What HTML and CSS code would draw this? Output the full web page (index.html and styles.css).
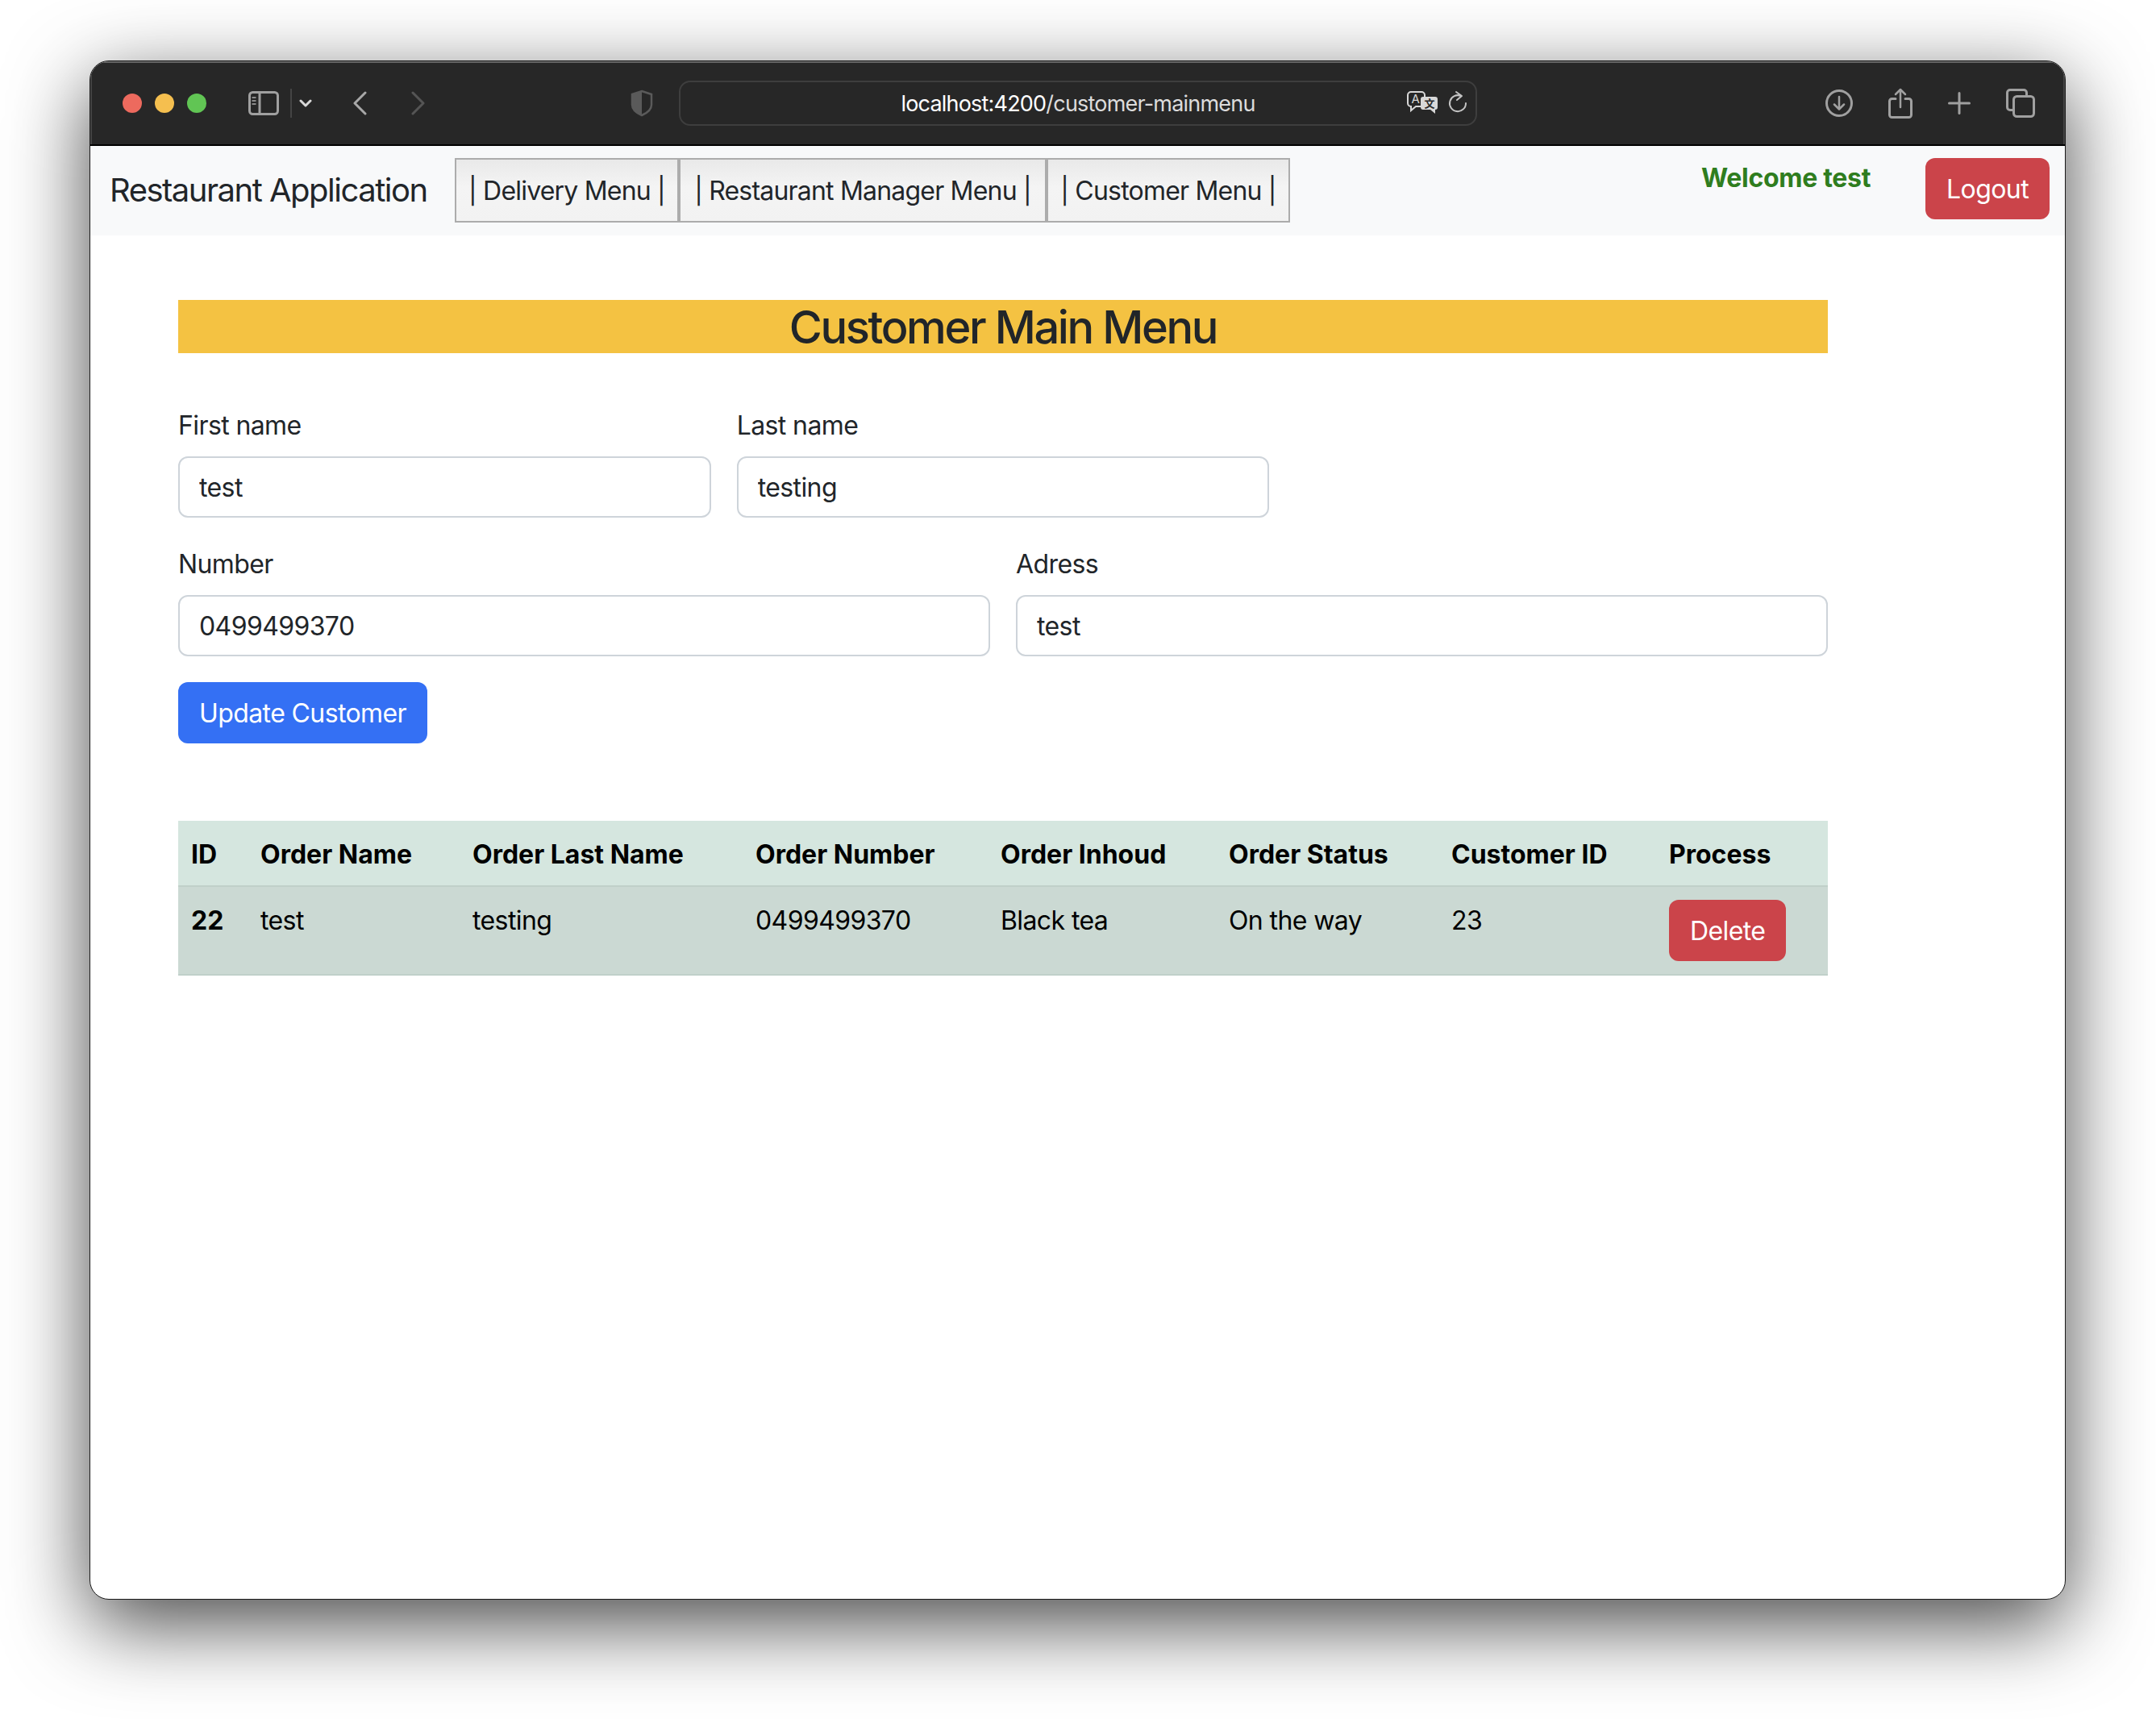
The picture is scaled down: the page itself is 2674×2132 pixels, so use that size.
FILE: index.html
```html
<!DOCTYPE html>
<html>
<head>
    <meta charset="utf-8">
    <title>Restaurant Application</title>
    <link rel="stylesheet" href="styles.css">
</head>
<body>
    <div class="window">
        <div class="titlebar">
            <div class="dots">
                <span class="dot dot-red"></span>
                <span class="dot dot-yellow"></span>
                <span class="dot dot-green"></span>
            </div>
            <svg class="ico ico-sidebar" width="40" height="32" viewBox="0 0 40 32" fill="none" stroke="#a0a0a0" stroke-width="3">
                <rect x="2.500" y="2.500" width="35" height="27" rx="4"/>
                <path d="M15 2v28"/>
                <path d="M5.500 9h5M5.500 13h5M5.500 17h5" stroke-width="2" stroke="#8c8c8c"/>
            </svg>
            <span class="sep"></span>
            <svg class="ico ico-chevron" width="16" height="10" viewBox="0 0 16 10" fill="none" stroke="#d8d8d8" stroke-width="3" stroke-linecap="round" stroke-linejoin="round">
                <path d="M2 2l6 6 6-6"/>
            </svg>
            <svg class="ico ico-back" width="18" height="30" viewBox="0 0 18 30" fill="none" stroke="#a8a8a8" stroke-width="3" stroke-linecap="round" stroke-linejoin="round">
                <path d="M16 2L3 15l13 13"/>
            </svg>
            <svg class="ico ico-forward" width="18" height="30" viewBox="0 0 18 30" fill="none" stroke="#555" stroke-width="3" stroke-linecap="round" stroke-linejoin="round">
                <path d="M2 2l13 13L2 28"/>
            </svg>
            <svg class="ico ico-shield" width="28" height="34" viewBox="0 0 28 34" fill="none">
                <path d="M14 2L26 6v13c0 6-5 10-12 13C7 29 2 25 2 19V6z" stroke="#5a5a5a" stroke-width="2.500"/>
                <path d="M14 2L2 6v13c0 6 5 10 12 13z" fill="#5a5a5a"/>
            </svg>
            <div class="addressbar">
                <span class="url">localhost:4200<span class="url-path">/customer-mainmenu</span></span>
                <div class="address-icons">
                    <svg width="40" height="30" viewBox="0 0 40 30">
                        <path d="M5 2h13a4 4 0 0 1 4 4v10a4 4 0 0 1-4 4H11l-6 5v-5a4 4 0 0 1-4-4V6a4 4 0 0 1 4-4z" fill="#272727" stroke="#d8d8d8" stroke-width="2"/>
                        <text class="glyph-a" x="5.500" y="16">A</text>
                        <path d="M20 8h15a3 3 0 0 1 3 3v10a3 3 0 0 1-3 3v5l-6-5h-9a3 3 0 0 1-3-3V11a3 3 0 0 1 3-3z" fill="#d8d8d8"/>
                        <text class="glyph-wen" x="21.500" y="21">文</text>
                    </svg>
                    <svg width="24" height="30" viewBox="0 0 24 30" fill="none" stroke="#c4c4c4" stroke-width="2" stroke-linecap="round" stroke-linejoin="round">
                        <path d="M16 7A10 10 0 1 0 22 16"/>
                        <path d="M10 2l7 5-6 5"/>
                    </svg>
                </div>
            </div>
            <div class="toolbar-right">
                <svg width="34" height="36" viewBox="0 0 34 36" fill="none" stroke="#a0a0a0" stroke-width="3" stroke-linecap="round" stroke-linejoin="round">
                    <circle cx="17" cy="18" r="15.500"/>
                    <path d="M17 10v15M11 19.500L17 25.500l6-6" stroke-width="2.500"/>
                </svg>
                <svg width="30" height="38" viewBox="0 0 30 38" fill="none" stroke="#a0a0a0" stroke-width="3" stroke-linecap="round" stroke-linejoin="round">
                    <path d="M9 13.500H4.500a3 3 0 0 0-3 3V33.500a3 3 0 0 0 3 3h21a3 3 0 0 0 3-3V16.500a3 3 0 0 0-3-3H21"/>
                    <path d="M15 24V2M9 8l6-6 6 6" stroke-width="2.500"/>
                </svg>
                <svg width="28" height="28" viewBox="0 0 28 28" fill="none" stroke="#a0a0a0" stroke-width="3" stroke-linecap="round">
                    <path d="M14 1.500v25M1.500 14h25"/>
                </svg>
                <svg width="36" height="36" viewBox="0 0 36 36" fill="none" stroke="#a0a0a0" stroke-width="3">
                    <path d="M8 26.500H5A3.500 3.500 0 0 1 1.500 23V5A3.500 3.500 0 0 1 5 1.500h17A3.500 3.500 0 0 1 25.500 5v3.500"/>
                    <rect x="9.500" y="9.500" width="25" height="25" rx="4"/>
                </svg>
            </div>
        </div>

        <nav class="navbar">
            <span class="brand">Restaurant Application</span>
            <div class="navbtns">
                <button class="navbtn navbtn-delivery">| Delivery Menu |</button>
                <button class="navbtn navbtn-manager">| Restaurant Manager Menu |</button>
                <button class="navbtn navbtn-customer">| Customer Menu |</button>
            </div>
            <span class="welcome">Welcome test</span>
            <button class="btn btn-danger">Logout</button>
        </nav>

        <div class="content">
            <h3 class="page-title">Customer Main Menu</h3>

            <form class="customer-form" onsubmit="event.preventDefault();">
                <div class="form-row form-row-3">
                    <div>
                        <label class="form-label">First name</label>
                        <input class="form-control" type="text" value="test">
                    </div>
                    <div>
                        <label class="form-label">Last name</label>
                        <input class="form-control" type="text" value="testing">
                    </div>
                </div>
                <div class="form-row form-row-2">
                    <div>
                        <label class="form-label">Number</label>
                        <input class="form-control" type="text" value="0499499370">
                    </div>
                    <div>
                        <label class="form-label">Adress</label>
                        <input class="form-control" type="text" value="test">
                    </div>
                </div>
                <button class="btn btn-primary">Update Customer</button>
            </form>

            <table class="orders">
                <colgroup>
                    <col class="col-id">
                    <col class="col-name">
                    <col class="col-last">
                    <col class="col-number">
                    <col class="col-inhoud">
                    <col class="col-status">
                    <col class="col-customer">
                    <col class="col-process">
                </colgroup>
                <thead>
                    <tr>
                        <th>ID</th>
                        <th>Order Name</th>
                        <th>Order Last Name</th>
                        <th>Order Number</th>
                        <th>Order Inhoud</th>
                        <th>Order Status</th>
                        <th>Customer ID</th>
                        <th>Process</th>
                    </tr>
                </thead>
                <tbody>
                    <tr>
                        <th>22</th>
                        <td>test</td>
                        <td>testing</td>
                        <td>0499499370</td>
                        <td>Black tea</td>
                        <td>On the way</td>
                        <td>23</td>
                        <td class="cell-action"><button class="btn btn-danger">Delete</button></td>
                    </tr>
                </tbody>
            </table>
        </div>
    </div>
</body>
</html>
```

FILE: styles.css
```css
* {
    box-sizing: border-box;
}

html, body {
    margin: 0;
    padding: 0;
    background: #fff;
}

body {
    height: 2132px;
    padding-top: 75px;
    font-family: "Inter", "Liberation Sans", sans-serif;
    font-size: 32px;
    line-height: 48px;
    color: #212529;
    letter-spacing: -0.6px;
    overflow: hidden;
}

.window {
    width: 2451px;
    height: 1909px;
    margin-left: 111px;
    background: #fff;
    border-radius: 24px;
    border: 1px solid #1a1a1a;
    box-shadow: 0 30px 100px rgba(0, 0, 0, 0.72);
    overflow: hidden;
}

/* browser chrome */
.titlebar {
    height: 105px;
    background: #272727;
    border-bottom: 2px solid #000;
    box-shadow: inset 0 2px 0 #666, inset 2px 0 0 #444, inset -2px 0 0 #444;
    display: flex;
    align-items: center;
}

.dots {
    display: flex;
    gap: 16px;
    margin-left: 40px;
}

.dot {
    width: 24px;
    height: 24px;
    border-radius: 50%;
}

.dot-red { background: #ed6a5e; }
.dot-yellow { background: #f5bf4f; }
.dot-green { background: #61c554; }

.ico {
    flex: none;
    display: block;
}

.ico-sidebar { margin-left: 51px; }

.sep {
    width: 2px;
    height: 36px;
    background: #444;
    margin-left: 13px;
}

.ico-chevron { margin-left: 9px; }
.ico-back { margin-left: 50px; }
.ico-forward { margin-left: 55px; }
.ico-shield { margin-left: 254px; }

.addressbar {
    position: relative;
    width: 990px;
    height: 56px;
    margin-left: 32px;
    border: 2px solid #3e3e3e;
    border-radius: 14px;
    text-align: center;
    line-height: 54px;
    font-size: 27px;
    letter-spacing: -0.8px;
    color: #fff;
}

.url-path {
    color: #dcdcdc;
}

.address-icons {
    position: absolute;
    top: 10px;
    right: 10px;
    display: flex;
    align-items: center;
    gap: 11px;
}

.address-icons svg {
    display: block;
}

.glyph-a {
    font-size: 15px;
    letter-spacing: 0;
    fill: #d8d8d8;
}

.glyph-wen {
    font-family: "Noto Sans CJK SC", sans-serif;
    font-size: 13px;
    font-weight: 700;
    letter-spacing: 0;
    fill: #272727;
}

.toolbar-right {
    display: flex;
    align-items: center;
    margin-left: 432px;
    gap: 44px;
}

/* navbar */
.navbar {
    height: 111px;
    background: #f8f9fa;
    display: flex;
    align-items: flex-start;
    padding: 15px 19px 0 24px;
}

.brand {
    font-size: 40px;
    line-height: 60px;
    margin-top: 10px;
    width: 428px;
    letter-spacing: -1.5px;
    color: #212529;
}

.navbtns {
    display: flex;
}

.navbtn {
    height: 80px;
    padding: 2px 0 0;
    font: inherit;
    letter-spacing: -0.8px;
    color: #212529;
    border: 2px solid #acacac;
    background: linear-gradient(#e9e9e9, #f4f4f4 45%, #f2f2f2);
}

.navbtn-delivery { width: 278px; }
.navbtn-manager { width: 456px; }
.navbtn-customer { width: 302px; }

.welcome {
    margin-left: auto;
    margin-right: 68px;
    margin-top: 1px;
    font-weight: 700;
    letter-spacing: -0.3px;
    color: #2f7d1e;
}

.btn {
    display: inline-block;
    font: inherit;
    letter-spacing: inherit;
    padding: 13px 24px 11px;
    border: 2px solid transparent;
    border-radius: 12px;
    color: #fff;
}

.btn-danger {
    background: #cb444a;
}

.btn-primary {
    background: #3470f4;
}

/* page */
.content {
    padding: 80px 0 0 109px;
    width: 2155px;
}

.page-title {
    margin: 0;
    padding-top: 3px;
    height: 66px;
    font-size: 56px;
    line-height: 63px;
    font-weight: 500;
    letter-spacing: -2.4px;
    text-align: center;
    background: #f4c242;
}

.customer-form {
    margin-top: 64px;
}

.form-row {
    display: grid;
    gap: 32px;
    margin-bottom: 32px;
}

.form-row-3 {
    grid-template-columns: repeat(3, 1fr);
}

.form-row-2 {
    grid-template-columns: repeat(2, 1fr);
}

.form-label {
    display: block;
    padding-top: 2px;
    margin-bottom: 14px;
}

.form-control {
    display: block;
    width: 100%;
    height: 76px;
    padding: 12px 24px;
    font: inherit;
    letter-spacing: inherit;
    color: #212529;
    background: #fff;
    border: 2px solid #ced4da;
    border-radius: 12px;
}

.orders {
    width: 100%;
    margin-top: 96px;
    table-layout: fixed;
    border-collapse: collapse;
    color: #000;
}

.orders th, .orders td {
    padding: 18px 16px 14px;
    text-align: left;
    vertical-align: top;
    font-weight: 400;
    border-bottom: 2px solid #c0d0c9;
    background: #cbd9d3;
}

.orders th {
    font-weight: 700;
    letter-spacing: 0;
}

.orders thead th {
    background: #d5e6df;
}

.orders .cell-action {
    padding: 16px;
}

.col-id { width: 86px; }
.col-name { width: 263px; }
.col-last { width: 351px; }
.col-number { width: 304px; }
.col-inhoud { width: 283px; }
.col-status { width: 276px; }
.col-customer { width: 270px; }
.col-process { width: 213px; }
```
